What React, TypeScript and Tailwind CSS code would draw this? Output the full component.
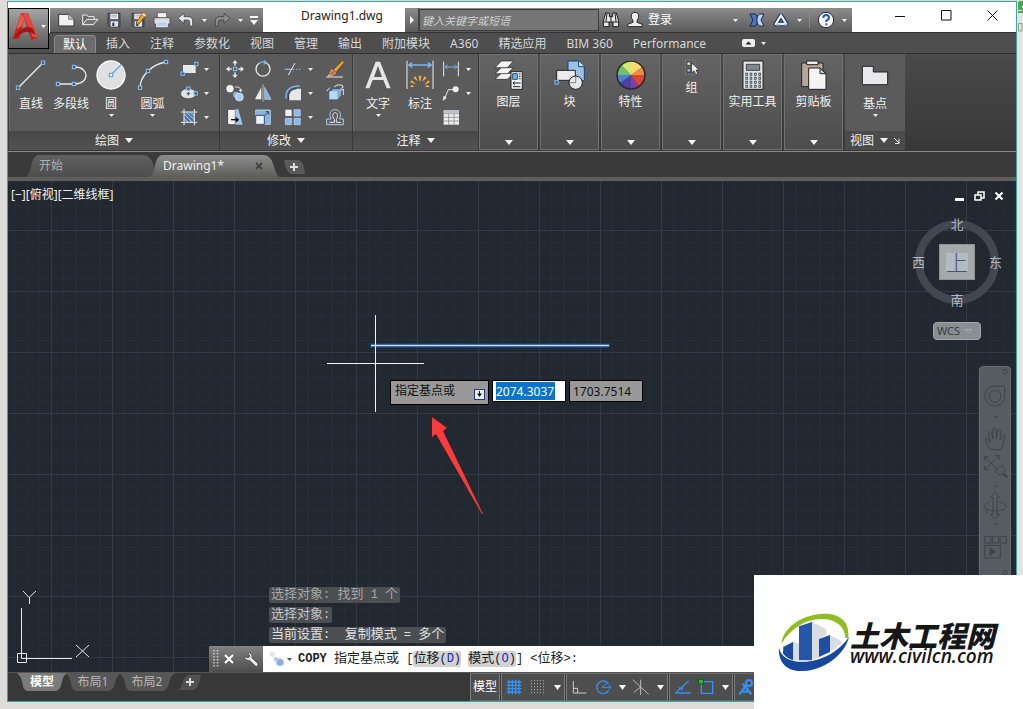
import React from "react";

type Kids = { children?: React.ReactNode };

/* Icons are drawn on a grid three times as fine as their size in pixels. */
function Icon({ w = 20, h = 20, children }: Kids & { w?: number; h?: number }) {
  return (
    <svg width={w} height={h} viewBox={`0 0 ${w * 3} ${h * 3}`} fill="none" className="shrink-0" aria-hidden="true">
      {children}
    </svg>
  );
}

function Down({ big = false }: { big?: boolean }) {
  return (
    <svg width={big ? 8 : 5} height={big ? 5 : 3} viewBox="0 0 8 5" preserveAspectRatio="none" className="shrink-0" aria-hidden="true">
      <path d="M0 0H8L4 5Z" fill="#f2f2f2" />
    </svg>
  );
}

function Grip({ x, y }: { x: number; y: number }) {
  return <rect x={x - 5} y={y - 5} width="10" height="10" fill="#3b5878" stroke="#8ec0f2" strokeWidth="3" />;
}

const LIGHT = "#e9ebee";
const BLUE = "#7db4ee";

const NewIcon = () => (
  <Icon><path d="M8 13H38L54 28V48H8Z" fill="#f2f2f2" stroke="#333" strokeWidth="3" /><path d="M38 13V28H54" fill="#bbb" stroke="#555" strokeWidth="2" /></Icon>
);
const OpenIcon = () => (
  <Icon><path d="M8 44V15H20L24 20H42V28" fill="#666" stroke="#eee" strokeWidth="3" /><path d="M8 44L20 28H54L40 44Z" fill="#777" stroke="#eee" strokeWidth="3" /></Icon>
);
const Disk = () => (
  <><path d="M12 10H48V50H16L12 46Z" fill="#56606e" stroke="#222" strokeWidth="2" /><path d="M19 11H42V27H19Z" fill="#f0f0f0" /><path d="M22 16H39M22 21H39" stroke="#888" strokeWidth="2" /><path d="M20 34H42V50H20Z" fill="#dfe5ec" /><path d="M25 38H31V48H25Z" fill="#333" /></>
);
const SaveIcon = () => <Icon><Disk /></Icon>;
const SaveAsIcon = () => (
  <Icon><Disk /><path d="M26 34L46 8L55 15L35 40L25 44Z" fill="#e9a52c" stroke="#4a3410" strokeWidth="2" /><path d="M46 8L55 15L51 20L42 13Z" fill="#f7e2a0" /></Icon>
);
const PrintIcon = () => (
  <Icon><path d="M16 8H44V24H16Z" fill="#f4f4f4" stroke="#444" strokeWidth="2" /><path d="M6 23H54V42H6Z" fill="#d9d9d9" stroke="#333" strokeWidth="2" /><path d="M14 35H46V50H14Z" fill="#b8d3ee" stroke="#eee" strokeWidth="3" /></Icon>
);
const UndoPath = ({ fill }: { fill: string }) => <path d="M6 25L24 10V20H36Q50 20 50 34V48H41V36Q41 30 34 30H24V40Z" fill={fill} stroke="#333" strokeWidth="2" />;
const UndoIcon = () => <Icon><UndoPath fill="#e4e8ec" /></Icon>;
const RedoIcon = () => <Icon><g transform="translate(60 0) scale(-1 1)"><UndoPath fill="#8d8d8d" /></g></Icon>;

const BinocularIcon = () => (
  <Icon><path d="M14 9H25V20H35V9H46L53 34V50H36V36H24V50H7V34Z" fill="#e8e8e8" stroke="#1d1d1d" strokeWidth="3" /><path d="M30 20V36M7 36H24M36 36H53M18 10L15 34M42 10L45 34" stroke="#1d1d1d" strokeWidth="3" /></Icon>
);
const UserIcon = () => (
  <Icon><path d="M30 7C40 7 43 16 40 25L36 33V37L52 43V50H8V43L24 37V33L20 25C17 16 20 7 30 7Z" fill="#eee" stroke="#222" strokeWidth="3" /></Icon>
);
const ExchangeIcon = () => (
  <Icon><path d="M9 12H24C34 16 34 44 24 48H9L18 30Z" fill="#4a78c4" stroke="#15264d" strokeWidth="3" /><path d="M51 12H38C27 18 27 42 38 48H51L42 30Z" fill="#bfd3ef" stroke="#15264d" strokeWidth="3" /></Icon>
);
const A360Icon = () => (
  <Icon><path d="M30 16L46 42H14Z" stroke="#1b2a4a" strokeWidth="13" strokeLinejoin="round" /><path d="M30 16L46 42H14Z" stroke="#e7effa" strokeWidth="7" strokeLinejoin="round" /><path d="M16 44H26M38 44H48M27 13H33" stroke="#9dbde6" strokeWidth="5" /></Icon>
);
const HelpIcon = () => (
  <Icon><circle cx="30" cy="30" r="23" fill="#f4f7fb" stroke="#223" strokeWidth="3" /><path d="M22 24Q22 15 30 15Q39 15 39 23Q39 28 31 32V36" stroke="#2559b0" strokeWidth="6" /><path d="M28 40H34V46H28Z" fill="#2559b0" /></Icon>
);

const LogoA = () => (
  <svg width="27" height="30" viewBox="0 0 81 90" aria-hidden="true">
    <path d="M26 4H48L78 78L58 84L37 22L22 80L2 82Z" fill="#c5221f" />
    <path d="M31 4H48L78 78L62 74Z" fill="#e2483e" />
    <path d="M2 82L22 56Q46 36 64 52L70 68Q44 50 24 68Z" fill="#a51317" />
    <path d="M26 4L13 52L30 42L38 18Z" fill="#e55a4c" />
  </svg>
);

const LineIcon = () => <Icon w={32} h={32}><path d="M9 87L84 11" stroke={LIGHT} strokeWidth="4" /><Grip x={9} y={86} /><Grip x={84} y={11} /></Icon>;
const PolyIcon = () => <Icon w={32} h={32}><path d="M9 75H60C104 75 104 24 60 24" stroke={LIGHT} strokeWidth="4" /><Grip x={57} y={24} /><Grip x={9} y={75} /><Grip x={57} y={75} /></Icon>;
const CircleIcon = () => <Icon w={32} h={32}><circle cx="48" cy="48" r="42" fill="#dfe0e2" stroke="#fff" strokeWidth="4" /><path d="M48 48L78 17" stroke="#6ba6e6" strokeWidth="4" /><rect x="43" y="43" width="10" height="10" fill="#fff" stroke="#5b98dc" strokeWidth="3" /></Icon>;
const ArcIcon = () => <Icon w={32} h={32}><path d="M9 87Q9 60 33 36Q55 14 87 9" stroke={LIGHT} strokeWidth="4" /><Grip x={87} y={9} /><Grip x={33} y={36} /><Grip x={9} y={86} /></Icon>;
const RectIcon = () => <Icon><path d="M12 18H50V42H12Z" fill="#e8e9eb" /><Grip x={52} y={15} /><Grip x={11} y={44} /></Icon>;
const EllipseIcon = () => <Icon><ellipse cx="28" cy="32" rx="22" ry="14" fill="#e2e3e5" /><path d="M28 27V37M23 32H33" stroke="#444" strokeWidth="3" /><Grip x={28} y={17} /><Grip x={50} y={31} /></Icon>;
const HatchIcon = () => <Icon><path d="M15 15H46V46H15Z" fill="#4c76a8" /><path d="M15 20L40 46M15 34L27 46M22 15L46 38M34 15L46 27" stroke="#bcd8f4" strokeWidth="3" /><path d="M15 6V55M46 6V55M6 15H55M6 46H55" stroke={LIGHT} strokeWidth="3" /></Icon>;

const MoveIcon = () => <Icon><path d="M30 3L38 13H32V20H28V13H22ZM30 57L38 47H32V40H28V47H22ZM3 30L13 22V28H20V32H13V38ZM57 30L47 22V28H40V32H47V38Z" fill={LIGHT} /><Grip x={30} y={30} /></Icon>;
const RotateIcon = () => <Icon><path d="M40 12A21 21 0 1 1 20 12" stroke={LIGHT} strokeWidth="4" /><path d="M20 12Q28 7 36 9" stroke={BLUE} strokeWidth="4" /><path d="M33 2L44 11L32 18Z" fill={BLUE} /></Icon>;
const TrimIcon = () => <Icon><path d="M5 31H28" stroke={BLUE} strokeWidth="4" /><path d="M30 31H56" stroke={BLUE} strokeWidth="3" strokeDasharray="5 4" /><path d="M16 48L36 12" stroke={LIGHT} strokeWidth="3" /></Icon>;
const BrushIcon = () => <Icon><path d="M25 32L52 5L58 10L33 40Z" fill="#e6a13c" stroke="#603c16" strokeWidth="2" /><path d="M20 32L32 42Q22 52 9 51Q16 44 20 32Z" fill="#e35823" stroke="#ffe0b0" strokeWidth="2" /><path d="M3 54H54" stroke={LIGHT} strokeWidth="3" /></Icon>;
const CopyIcon = () => <Icon><circle cx="15" cy="17" r="11" fill="#f2f2f2" /><circle cx="33" cy="35" r="9" fill="#8bb6e4" /><circle cx="43" cy="42" r="12" fill="#a9cdf2" stroke="#e8f2fd" strokeWidth="2" /><path d="M31 12Q46 10 47 22" stroke={LIGHT} strokeWidth="3" /><path d="M41 20H53L47 28Z" fill={LIGHT} /></Icon>;
const MirrorIcon = () => <Icon><path d="M25 13V49H6Z" fill="#eee" /><path d="M35 13V49H54Z" fill="#8fb0d1" stroke="#bdd7f0" strokeWidth="2" /><path d="M30 4V56" stroke={LIGHT} strokeWidth="2" /></Icon>;
const FilletIcon = () => <Icon><path d="M18 52V34Q24 19 41 17H54V52Z" fill="#e5e6e8" /><path d="M9 47V35Q14 10 43 9H50" stroke={BLUE} strokeWidth="4" /><path d="M17 52V34Q22 18 41 17" stroke="#27374e" strokeWidth="3" /></Icon>;
const ExplodeIcon = () => <Icon><path d="M13 25L25 17H49V37L39 50H13Z" fill="#83aed8" stroke="#24496e" strokeWidth="2" /><path d="M13 25H37V49H13Z" fill="#b8d8f6" /><path d="M5 25L14 14M27 12L36 6H51L55 12L46 18M46 24L55 18V36" stroke="#d8e7f6" strokeWidth="3" /></Icon>;
const StretchIcon = () => <Icon><path d="M8 7H31V53H8Z" fill="#f3f3f3" stroke="#222" strokeWidth="2" /><path d="M31 7L40 7L53 53H31Z" fill="#9fc6ed" /><path d="M18 38H38" stroke="#111" strokeWidth="4" /><path d="M32 29L43 38L32 47Z" fill="#111" /></Icon>;
const ScaleIcon = () => <Icon><path d="M8 9H52V52H8Z" fill="#8ab4df" stroke="#d9e8f7" strokeWidth="2" /><path d="M8 25H34V52H8Z" fill="#f0f2f5" stroke="#324b69" strokeWidth="3" /><path d="M35 26L46 15M38 14H47V23" stroke="#24496e" strokeWidth="3" /></Icon>;
const ArrayIcon = () => <Icon><path d="M7 8H26V27H7Z" fill="#f1f1f1" /><path d="M33 8H52V27H33ZM7 34H26V53H7ZM33 34H52V53H33Z" fill="#8eb9e6" stroke="#b9d8f8" strokeWidth="2" /></Icon>;
const OffsetIcon = () => (
  <Icon>
    <path d="M5 53H55V36H44V34C50 24 46 8 30 8C14 8 12 24 18 34V36H5Z" stroke="#a9cdf2" strokeWidth="3" />
    <path d="M13 46H28V38C20 26 24 17 30 17C38 17 40 26 34 38V46H48" stroke={LIGHT} strokeWidth="3" />
  </Icon>
);

const TextIcon = () => <Icon w={32} h={32}><path d="M10 88L41 8H54L86 88H74L64 63H32L22 88ZM36 54H60L48 20Z" fill="#e6e6e6" fillRule="evenodd" /></Icon>;
const DimIcon = () => (
  <Icon w={32} h={32}>
    <path d="M9 5V90M87 5V90" stroke={LIGHT} strokeWidth="3" />
    <path d="M16 18H80M25 11L14 18L25 25M71 11L82 18L71 25" stroke={BLUE} strokeWidth="4" />
    <g fill="#f3ae37"><path d="M44 50H52L50 66H46ZM28 57L35 52L42 67ZM61 52L68 57L54 68ZM18 70L23 64L36 76ZM73 64L78 70L60 77Z" /><path d="M18 84H32L24 77ZM63 84H78L70 77Z" /></g>
  </Icon>
);
const LinearIcon = () => <Icon><path d="M8 8V52M52 8V52" stroke={LIGHT} strokeWidth="3" /><path d="M12 24H48M20 18L12 24L20 30M40 18L48 24L40 30" stroke={BLUE} strokeWidth="3" /></Icon>;
const LeaderIcon = () => <Icon><path d="M9 50L22 20H36" stroke={LIGHT} strokeWidth="3" /><circle cx="44" cy="19" r="9" fill="#eee" /><path d="M5 54L8 38L17 44Z" fill={LIGHT} /></Icon>;
const TableIcon = () => <Icon><path d="M8 10H54V53H8Z" fill="#eee" /><path d="M8 20H54M8 31H54M8 42H54M23 20V53M39 20V53" stroke="#777" strokeWidth="2" /><path d="M8 10H54V19H8Z" fill="#bcc3ca" /></Icon>;

const LayersIcon = () => (
  <Icon w={32} h={32}>
    <g fill="#f4f4f4" stroke="#222" strokeWidth="2"><path d="M6 61L25 43H61L43 61Z" /><path d="M6 44L25 26H61L43 44Z" /><path d="M6 26L25 6H61L43 26Z" /></g>
    <path d="M54 38H88V91H54Z" fill="#eef1f5" stroke="#222" strokeWidth="3" /><path d="M59 44H73V61H59Z" fill="#79b4e8" stroke="#214c7b" strokeWidth="3" /><path d="M78 45H83M78 52H83M78 59H83M60 72H83M65 67L60 72L65 77M60 83H82" stroke="#222" strokeWidth="3" />
  </Icon>
);
const BlockIcon = () => (
  <Icon w={32} h={32}>
    <path d="M42 6H74L91 23V65H42Z" fill="#9cc2ea" stroke="#1d3f68" strokeWidth="3" /><path d="M74 6V23H91" fill="#dcecfb" stroke="#1d3f68" strokeWidth="3" />
    <path d="M8 34H64V64H8Z" fill="#ececee" stroke="#222" strokeWidth="3" /><circle cx="65" cy="71" r="20" fill="#e6e7ea" stroke="#222" strokeWidth="3" /><path d="M65 51V71H46" stroke="#555" strokeWidth="2" /><Grip x={8} y={70} />
  </Icon>
);
const WheelIcon = () => (
  <Icon w={32} h={32}>
    <path d="M48 48V4A44 44 0 0 1 84 22Z" fill="#f5dc78" /><path d="M48 48L84 22A44 44 0 0 1 92 48Z" fill="#ee8b44" /><path d="M48 48H92A44 44 0 0 1 74 84Z" fill="#dd4630" /><path d="M48 48L74 84A44 44 0 0 1 48 92Z" fill="#8c3c9a" /><path d="M48 48V92A44 44 0 0 1 12 74Z" fill="#4b3fa8" /><path d="M48 48L12 74A44 44 0 0 1 4 48Z" fill="#4f7fd0" /><path d="M48 48H4A44 44 0 0 1 18 16Z" fill="#6fc06c" /><path d="M48 48L18 16A44 44 0 0 1 48 4Z" fill="#d9e66e" />
    <circle cx="48" cy="48" r="42" stroke="#2b2b2b" strokeWidth="5" />
  </Icon>
);
const GroupIcon = () => <Icon w={16} h={18}><path d="M4 4H34V46H4Z" stroke="#7fa6c8" strokeWidth="2" strokeDasharray="3 4" /><path d="M9 9H20V19H9Z" fill="#dce9cb" stroke="#222" strokeWidth="2" /><path d="M9 29H20V39H9Z" fill="#8dbbea" stroke="#222" strokeWidth="2" /><path d="M23 12V42L30 35L36 47L41 44L36 33H45Z" fill="#f5f5e8" stroke="#222" strokeWidth="2" /></Icon>;
const CalcIcon = () => (
  <Icon w={32} h={32}>
    <path d="M18 6H78V91H18Z" fill="#e5e5e5" stroke="#222" strokeWidth="3" /><path d="M28 16H68V34H28Z" fill="#7f8790" stroke="#444" strokeWidth="3" />
    <path d="M25 46H72M25 58H72M25 70H72M25 82H72" stroke="#444c58" strokeWidth="9" strokeDasharray="8 5" /><path d="M27 46H72M27 58H72M27 70H72M27 82H72" stroke="#a9b4c4" strokeWidth="4" strokeDasharray="4 9" />
  </Icon>
);
const PasteIcon = () => (
  <Icon w={32} h={32}>
    <path d="M11 12H75V83H11Z" fill="#b5a797" stroke="#2b2520" strokeWidth="3" /><path d="M26 6H60V17H26Z" fill="#eee" stroke="#222" strokeWidth="3" /><path d="M32 27H66L84 44V91H32Z" fill="#f4f4f4" stroke="#222" strokeWidth="3" /><path d="M66 27V44H84Z" fill="#ccc" stroke="#222" strokeWidth="3" />
  </Icon>
);
const BaseIcon = () => <Icon w={32} h={32}><path d="M10 22H43V39H86V77H10Z" fill="#e9e9eb" stroke="#222" strokeWidth="3" /></Icon>;

/* ---------- ribbon building blocks ---------- */

function Big({ icon, label, arrow, width }: { icon: React.ReactNode; label: string; arrow?: boolean; width: string }) {
  return (
    <button className={`flex flex-col items-center pt-[5px] ${width}`}>
      {icon}
      <span className="mt-[5px] whitespace-nowrap text-xs leading-4 text-[#f0f0f0]">{label}</span>
      {arrow && <span className="mt-[2px]"><Down /></span>}
    </button>
  );
}

function Small({ icon, label, arrow }: { icon: React.ReactNode; label: string; arrow?: boolean }) {
  return (
    <button aria-label={label} className="flex h-6 items-center gap-[5px]">
      {icon}
      {arrow && <Down />}
    </button>
  );
}

const Stack = ({ children }: Kids) => <div className="flex flex-col pt-[3px]">{children}</div>;

function Panel({ title, width, children }: Kids & { title: string; width: string }) {
  return (
    <section className={`flex shrink-0 flex-col border-r border-[#383838] bg-[#5b5b5b] ${width}`}>
      <div className="flex flex-1 shadow-[inset_1px_0_0_#6a6a6a]">{children}</div>
      <button className="flex h-[19px] items-center justify-center gap-[6px] bg-linear-to-b from-[#484848] to-[#525252] text-xs text-[#f0f0f0]">
        {title}<Down big />
      </button>
    </section>
  );
}

function Folded({ icon, label }: { icon: React.ReactNode; label: string }) {
  return (
    <button className="mr-[2px] flex w-[59px] shrink-0 flex-col items-center border border-[#717171] bg-linear-to-b from-[#646464] to-[#4d4d4d] pb-1 pt-1">
      {icon}
      <span className="mt-[3px] whitespace-nowrap text-xs leading-4 text-[#f0f0f0]">{label}</span>
      <span className="mt-auto"><Down big /></span>
    </button>
  );
}

const QuickButton = ({ label, children }: Kids & { label: string }) => (
  <button aria-label={label} className="flex h-6 w-6 items-center justify-center">{children}</button>
);
const Drop = ({ label }: { label: string }) => (
  <button aria-label={label} className="flex h-6 w-3 items-center justify-center"><Down /></button>
);

function TitleBar() {
  return (
    <div className="flex h-[30px] bg-white pt-[6px]">
      <div className="flex w-[213px] shrink-0 items-center bg-linear-to-b from-[#8c8c8c] to-[#5b5b5b] pl-1">
        <QuickButton label="新建"><NewIcon /></QuickButton>
        <QuickButton label="打开"><OpenIcon /></QuickButton>
        <QuickButton label="保存"><SaveIcon /></QuickButton>
        <QuickButton label="另存为"><SaveAsIcon /></QuickButton>
        <QuickButton label="打印"><PrintIcon /></QuickButton>
        <QuickButton label="放弃"><UndoIcon /></QuickButton>
        <Drop label="放弃列表" />
        <QuickButton label="重做"><RedoIcon /></QuickButton>
        <Drop label="重做列表" />
        <button aria-label="自定义" className="ml-1 flex flex-col items-center gap-[2px]">
          <span className="h-[2px] w-2 bg-white" /><Down big />
        </button>
      </div>
      <h1 className="flex-1 pl-4 text-center text-xs leading-4 text-[#222]">Drawing1.dwg</h1>
      <div className="flex w-[447px] shrink-0 items-center bg-linear-to-b from-[#8c8c8c] to-[#5b5b5b]">
        <button aria-label="展开" className="flex h-6 w-[14px] items-center justify-center border-r border-[#444]">
          <svg width="4" height="8" viewBox="0 0 4 8"><path d="M0 0L4 4L0 8Z" fill="#fff" /></svg>
        </button>
        <input aria-label="搜索" placeholder="键入关键字或短语" className="h-[22px] w-[180px] border border-[#3c3c3c] bg-[#757575] px-[2px] text-[11px] italic text-white placeholder:text-[#d0d0d0]" />
        <QuickButton label="搜索"><BinocularIcon /></QuickButton>
        <button className="flex items-center gap-[3px] text-xs text-white"><span className="pl-[2px]"><UserIcon /></span>登录</button>
        <span className="ml-auto"><Drop label="登录菜单" /></span>
        <span className="ml-1"><QuickButton label="Exchange"><ExchangeIcon /></QuickButton></span>
        <QuickButton label="A360"><A360Icon /></QuickButton>
        <Drop label="A360 菜单" />
        <span className="mx-1 h-4 w-px bg-[#8a8a8a]" />
        <QuickButton label="帮助"><HelpIcon /></QuickButton>
        <span className="pr-[2px]"><Drop label="帮助菜单" /></span>
      </div>
      <div className="-mt-[6px] flex w-[164px] shrink-0 justify-end pr-px">
        <button aria-label="最小化" className="flex h-[26px] w-[46px] items-center justify-center"><svg width="11" height="11"><path d="M0 6.5H10" stroke="#111" /></svg></button>
        <button aria-label="最大化" className="flex h-[26px] w-[46px] items-center justify-center"><svg width="11" height="11"><path d="M.5.5H10V10H.5Z" fill="none" stroke="#111" /></svg></button>
        <button aria-label="关闭" className="flex h-[26px] w-[46px] items-center justify-center"><svg width="11" height="11"><path d="M.5.5L10.5 10.5M10.5.5L.5 10.5" stroke="#111" /></svg></button>
      </div>
    </div>
  );
}

const TABS = ["插入", "注释", "参数化", "视图", "管理", "输出", "附加模块", "A360", "精选应用", "BIM 360", "Performance"];

function Header() {
  return (
    <header className="flex bg-[#4e4e4e]">
      <div className="w-[42px] shrink-0 bg-linear-to-b from-white from-60% to-[#4e4e4e] to-60% pt-[6px]">
        <button aria-label="应用程序菜单" className="flex h-[41px] w-[41px] items-center justify-center gap-[2px] border border-black bg-linear-to-b from-[#a5a5a5] to-[#5c5c5c] pb-1">
          <LogoA /><Down />
        </button>
      </div>
      <div className="min-w-0 flex-1">
        <TitleBar />
        <nav className="flex h-[21px] items-stretch border-t border-[#333] text-xs text-[#d6d6d6]">
          <a href="#home" className="ml-1 mt-[2px] flex w-[42px] items-center justify-center rounded-t-sm border border-b-0 border-[#8a8a8a] bg-[#6b6b6b] text-white">默认</a>
          {TABS.map((t) => (
            <a key={t} href="#tab" className="flex items-center whitespace-nowrap px-[10px] pt-[2px]">{t}</a>
          ))}
          <button aria-label="最小化功能区" className="ml-[26px] flex items-center gap-[6px]">
            <svg width="13" height="8" viewBox="0 0 13 8"><rect width="13" height="8" rx="2" fill="#eee" /><path d="M3.500 5.500H9.500L6.500 2.500Z" fill="#222" /></svg>
            <Down />
          </button>
        </nav>
      </div>
    </header>
  );
}

function Ribbon() {
  return (
    <div className="flex h-[99px] border-b border-t border-b-[#8a8a8a] border-t-[#303030] bg-linear-to-b from-[#4a4a4a] to-[#383838] pb-px pl-px">
      <Panel title="绘图" width="w-[211px]">
        <Big icon={<LineIcon />} label="直线" width="ml-[3px] w-[38px]" />
        <Big icon={<PolyIcon />} label="多段线" width="w-[42px]" />
        <Big icon={<CircleIcon />} label="圆" arrow width="w-[38px]" />
        <Big icon={<ArcIcon />} label="圆弧" arrow width="w-[45px]" />
        <div className="ml-[4px]">
          <Stack>
            <Small icon={<RectIcon />} label="矩形" arrow />
            <Small icon={<EllipseIcon />} label="椭圆" arrow />
            <Small icon={<HatchIcon />} label="图案填充" arrow />
          </Stack>
        </div>
      </Panel>
      <Panel title="修改" width="w-[133px]">
        <div className="ml-[5px] flex gap-2">
          <Stack><Small icon={<MoveIcon />} label="移动" /><Small icon={<CopyIcon />} label="复制" /><Small icon={<StretchIcon />} label="拉伸" /></Stack>
          <Stack><Small icon={<RotateIcon />} label="旋转" /><Small icon={<MirrorIcon />} label="镜像" /><Small icon={<ScaleIcon />} label="缩放" /></Stack>
          <div className="pl-[2px] pr-1"><Stack><Small icon={<TrimIcon />} label="修剪" arrow /><Small icon={<FilletIcon />} label="圆角" arrow /><Small icon={<ArrayIcon />} label="阵列" arrow /></Stack></div>
          <Stack><Small icon={<BrushIcon />} label="删除" /><Small icon={<ExplodeIcon />} label="分解" /><Small icon={<OffsetIcon />} label="偏移" /></Stack>
        </div>
      </Panel>
      <Panel title="注释" width="w-[126px]">
        <Big icon={<TextIcon />} label="文字" arrow width="ml-[4px] w-[42px]" />
        <Big icon={<DimIcon />} label="标注" width="w-[42px]" />
        <Stack>
          <Small icon={<LinearIcon />} label="线性" arrow />
          <Small icon={<LeaderIcon />} label="引线" arrow />
          <Small icon={<TableIcon />} label="表格" />
        </Stack>
      </Panel>
      <div className="flex">
        <Folded icon={<LayersIcon />} label="图层" />
        <Folded icon={<BlockIcon />} label="块" />
        <Folded icon={<WheelIcon />} label="特性" />
        <Folded icon={<GroupIcon />} label="组" />
        <Folded icon={<CalcIcon />} label="实用工具" />
        <Folded icon={<PasteIcon />} label="剪贴板" />
      </div>
      <section className="flex w-[60px] shrink-0 flex-col bg-[#5b5b5b]">
        <div className="flex flex-1 justify-center"><Big icon={<BaseIcon />} label="基点" arrow width="w-[40px]" /></div>
        <button className="flex h-[19px] items-center gap-[6px] bg-[#4b4b4b] pl-[5px] text-xs text-[#f0f0f0]">
          视图<Down big />
          <svg width="6" height="6" viewBox="0 0 6 6"><path d="M0 0L5 5M5 1V5.500H1" stroke="#eee" fill="none" /></svg>
        </button>
      </section>
    </div>
  );
}

function FileTab({ active = false, children }: Kids & { active?: boolean }) {
  return (
    <div className={`relative flex h-[22px] items-center ${active ? "z-10 -ml-[11px] w-[131px]" : "w-[135px]"}`}>
      <svg className="absolute inset-0 h-full w-full" viewBox="0 0 135 22" preserveAspectRatio="none" aria-hidden="true">
        <defs>
          <linearGradient id={active ? "tabOn" : "tabOff"} x1="0" y1="0" x2="0" y2="1">
            <stop offset="0" stopColor={active ? "#8d8d8b" : "#606060"} /><stop offset="1" stopColor={active ? "#5d5d5a" : "#4e4e4e"} />
          </linearGradient>
        </defs>
        <path d="M0 22Q4 21 6 12Q8 0 14 0H118Q125 0 128 9Q131 21 135 22Z" fill={active ? "url(#tabOn)" : "url(#tabOff)"} />
      </svg>
      {children}
    </div>
  );
}

function FileTabs() {
  return (
    <div className="flex h-[29px] shrink-0 items-end border-b-4 border-[#5d5d5a] bg-[#3a3a3a] pl-[17px]">
      <FileTab><button className="relative pl-[14px] text-xs text-[#b0b0b0]">开始</button></FileTab>
      <FileTab active>
        <button className="relative pl-[14px] text-xs text-[#f0f0f0]">Drawing1*</button>
        <button aria-label="关闭图形" className="relative ml-auto mr-[17px]"><svg width="8" height="8"><path d="M1 1L7 7M7 1L1 7" stroke="#454545" strokeWidth="2" /></svg></button>
      </FileTab>
      <button aria-label="新图形" className="relative mb-[3px] ml-[3px] flex h-[14px] w-[22px] items-center justify-center">
        <svg width="22" height="14" viewBox="0 0 22 14"><path d="M1 0H16Q21 2 22 14H8Q3 12 1 0Z" fill="#5b5b5b" /><path d="M7 7H15M11 3V11" stroke="#ddd" strokeWidth="2" /></svg>
      </button>
    </div>
  );
}

/* ---------- drawing area ---------- */

function Drawing() {
  return (
    <>
      <svg className="absolute inset-0 h-full w-full" aria-hidden="true">
        <defs>
          <pattern id="minor" x="43" y="49" width="12.200" height="12.200" patternUnits="userSpaceOnUse"><path d="M.5 0V13M0 .5H13" stroke="#262d36" /></pattern>
          <pattern id="major" x="43" y="49" width="61" height="61" patternUnits="userSpaceOnUse"><path d="M.5 0V61M0 .5H61" stroke="#323b45" /></pattern>
        </defs>
        <rect width="100%" height="100%" fill="url(#minor)" />
        <rect width="100%" height="100%" fill="url(#major)" />
        <path d="M362 164.500H602" stroke="#28559c" strokeWidth="5" strokeOpacity=".45" />
        <path d="M363 164.500H601" stroke="#3569b4" strokeWidth="3" />
        <path d="M363 164.500H601" stroke="#d6e8fb" strokeWidth="1" />
        <path d="M367.500 134V231M319 182.500H416" stroke="#f2f2f2" />
        <path d="M424 236L439 247L435 250L475 333L474 333L428 253L424 256Z" fill="#fb3b3b" />
      </svg>
      <svg className="absolute bottom-[4px] left-[8px]" width="76" height="78" viewBox="0 0 76 78" fill="none" stroke="#e8e8e8" aria-hidden="true">
        <path d="M5.500 18V68.500H56M1.500 63.500H10.500V72.500H1.500ZM7 1L13 7.500L20 1M13.500 7V14M60 55L73 67M73 55L60 67" />
      </svg>
    </>
  );
}

function DynamicInput() {
  return (
    <div className="absolute left-[382px] top-[199px] flex items-start gap-[3px] text-xs text-[#111]">
      <div className="flex h-[25px] w-[99px] items-center justify-between border border-black bg-[#999] pl-1 pr-[3px]">
        <span className="pb-[3px]">指定基点或</span>
        <button aria-label="选项" className="mt-1 flex h-[11px] w-[11px] items-center justify-center border border-[#223a8c] bg-[#eee]">
          <svg width="7" height="7" viewBox="0 0 7 7"><path d="M3.500 0V5" stroke="#111" /><path d="M1 2.500H6L3.500 6Z" fill="#111" /></svg>
        </button>
      </div>
      <label className="flex h-[22px] w-[74px] items-center border border-black bg-white px-[3px]">
        <input aria-label="X 坐标" defaultValue="2074.3037" className="h-[18px] w-[59px] bg-[#0a74cc] text-white outline-none" />
      </label>
      <input aria-label="Y 坐标" defaultValue="1703.7514" className="h-[22px] w-[74px] border border-black bg-[#999] px-[3px] outline-none" />
    </div>
  );
}

function ViewCube() {
  return (
    <div className="absolute right-[14px] top-[34px] flex w-[90px] flex-col items-center text-[13px] leading-[18px] text-[#b5b9be]">
      <svg className="absolute left-[3px] top-[5px]" width="84" height="84" aria-hidden="true"><circle cx="42" cy="42" r="38" fill="none" stroke="#414852" strokeWidth="8" /></svg>
      <span className="relative">北</span>
      <div className="relative my-[11px] flex w-full items-center justify-between">
        <span>西</span>
        <button className="flex h-9 w-9 items-center justify-center border border-[#8f9394] bg-[#a6a9a9] text-[22px] font-light text-[#4d565f]"><span className="bg-[#b3bbc2]">上</span></button>
        <span>东</span>
      </div>
      <span className="relative">南</span>
      <button className="mt-[13px] flex h-[18px] w-[48px] items-center gap-1 rounded-[4px] border border-[#a3a7aa] bg-[#898e93] pl-[3px] text-[11px] text-[#353b43]">
        WCS<svg width="9" height="5"><path d="M1 .5H8L4.500 4Z" fill="none" stroke="#a7abb0" /></svg>
      </button>
    </div>
  );
}

function NavBar() {
  return (
    <div className="absolute right-[5px] top-[185px] h-[240px] w-8 rounded-[4px] border border-[#686e73] bg-[#565d62]">
      <svg width="30" height="210" viewBox="0 0 90 630" fill="none" stroke="#3c434b" strokeWidth="3" aria-hidden="true">
        <circle cx="75" cy="14" r="7" />
        <path d="M45 57H74V91A30 30 0 1 1 45 57Z" /><circle cx="45" cy="88" r="18" />
        <path d="M44 149H50L47 153ZM44 357H50L47 361ZM44 471H50L47 475Z" />
        <path d="M29 244L17 222Q14 211 23 216L31 226L25 197Q27 188 34 197L39 216L38 187Q43 179 48 187L49 215L54 191Q61 184 63 195L59 220L69 205Q76 201 75 211L64 248H35Z" />
        <path d="M14 270L55 310M57 266L14 307M14 281V269H26M45 266H58V278M14 295V308H27" /><circle cx="61" cy="310" r="13" /><path d="M70 320L82 332" strokeWidth="6" />
        <path d="M39 397V391H31L45 376L59 391H51V397V442H59L45 455L31 442H39Z" /><path d="M28 405C-4 418 18 432 45 432C83 432 91 411 58 405M24 425L16 432L24 439" />
        <path d="M14 508H33V528H14ZM37 508H56V528H37ZM60 508H79V528H60ZM14 535H61V573H14Z" /><path d="M30 543L47 554L30 565Z" fill="#3c434b" />
        <circle cx="75" cy="617" r="7" />
      </svg>
    </div>
  );
}

/* Chinese prompt text runs one size larger than the monospaced Latin text around it. */
const Zh = ({ children }: Kids) => <span className="text-[13px]">{children}</span>;
const History = ({ children, tone }: Kids & { tone: string }) => (
  <p className={`w-fit whitespace-pre rounded-[2px] bg-[#4c4f52] px-[2px] leading-4 ${tone}`}>{children}</p>
);

function CommandLine() {
  return (
    <div className="absolute inset-x-0 bottom-0 pl-[201px] font-['Liberation_Mono','Noto_Sans_CJK_SC',monospace] text-xs">
      <div className="mb-[3px] flex flex-col gap-1 pl-[60px]">
        <History tone="text-[#a4a6a8]"><Zh>选择对象</Zh>: <Zh>找到</Zh> 1 <Zh>个</Zh></History>
        <History tone="text-[#c0c2c4]"><Zh>选择对象</Zh>:</History>
        <History tone="text-[#dfe0e1]"><Zh>当前设置</Zh>:{"  "}<Zh>复制模式</Zh> = <Zh>多个</Zh></History>
      </div>
      <div className="flex h-[26px] rounded-l-[3px] bg-white">
        <div className="flex w-[54px] items-center rounded-l-[3px] bg-linear-to-b from-[#828282] to-[#4d4d4d] pl-1">
          <svg width="6" height="18" aria-hidden="true"><path d="M1 0V18M4.500 0V18" stroke="#ccc" strokeWidth="1.500" strokeDasharray="1.500 1.500" /></svg>
          <button aria-label="关闭命令行" className="ml-[5px]"><svg width="10" height="10"><path d="M1 1L9 9M9 1L1 9" stroke="#fff" strokeWidth="2" /></svg></button>
          <button aria-label="自定义" className="ml-[10px]">
            <svg width="15" height="15" viewBox="0 0 45 45"><path d="M17 2Q26 7 24 18L41 34Q44 40 38 43Q34 43 32 40L17 25Q7 27 2 18L3 14L12 18L18 13L13 4Z" fill="#f4f4f4" stroke="#333" strokeWidth="2" /></svg>
          </button>
        </div>
        <div className="flex items-center whitespace-pre pl-[6px] text-[#1c1c1c]">
          <svg width="16" height="16" viewBox="0 0 48 48" aria-hidden="true"><circle cx="10" cy="10" r="8" fill="#e2e5e8" /><circle cx="21" cy="25" r="7" fill="#b0cbe7" /><circle cx="33" cy="34" r="11" fill="#84ade0" stroke="#bfd6ee" strokeWidth="3" /></svg>
          <svg className="ml-[2px]" width="5" height="3"><path d="M0 0H5L2.500 3Z" fill="#555" /></svg>
          <p className="ml-[6px]">
            <b>COPY</b> <Zh>指定基点或</Zh> [<span className="rounded-[2px] bg-[#d2d2d2] py-px"><Zh>位移</Zh>(<span className="text-[#2222c8]">D</span>)</span> <span className="rounded-[2px] bg-[#d2d2d2] py-px"><Zh>模式</Zh>(<span className="text-[#2222c8]">O</span>)</span>] &lt;<Zh>位移</Zh>&gt;:
          </p>
        </div>
      </div>
    </div>
  );
}

function Canvas() {
  return (
    <main className="relative min-h-0 flex-1 overflow-hidden bg-[#212830]">
      <Drawing />
      <p className="relative w-fit pl-[3px] pt-[6px] text-xs leading-4 text-[#f0f0f0]">[−][俯视][二维线框]</p>
      <div className="absolute right-[12px] top-[10px] flex items-center gap-[9px]">
        <button aria-label="最小化视口"><svg width="11" height="10"><path d="M1 8.500H10" stroke="#fff" strokeWidth="3" /></svg></button>
        <button aria-label="还原视口"><svg width="11" height="10"><path d="M1 4H7V9H1ZM4 4V1H10V7H7" fill="none" stroke="#fff" strokeWidth="1.500" /></svg></button>
        <button aria-label="关闭视口"><svg width="10" height="10"><path d="M1.500 1.500L8.500 8.500M8.500 1.500L1.500 8.500" stroke="#fff" strokeWidth="2" /></svg></button>
      </div>
      <DynamicInput />
      <ViewCube />
      <NavBar />
      <CommandLine />
    </main>
  );
}

/* ---------- bottom bar ---------- */

function LayoutTab({ active = false, children }: Kids & { active?: boolean }) {
  return (
    <button className={`relative -mr-[2px] flex h-[18px] items-center justify-center text-xs ${active ? "z-10 w-[50px] font-bold text-white" : "w-[56px] text-[#b8b8b8]"}`}>
      <svg className="absolute inset-0 h-full w-full" viewBox="0 0 56 18" preserveAspectRatio="none" aria-hidden="true">
        <path d="M0 0Q4 2 6 10Q7 18 12 18H43Q48 18 50 10Q52 2 56 0Z" fill={active ? "#7b7b79" : "#575757"} />
      </svg>
      <span className="relative">{children}</span>
    </button>
  );
}

const StatusGroup = ({ children }: Kids) => (
  <div className="flex items-center border-x border-[#7c7c7c] bg-[#4e4e4e]">{children}</div>
);
const StatusButton = ({ label, children }: Kids & { label: string }) => (
  <button aria-label={label} className="flex w-6 justify-center">{children}</button>
);
const StatusDrop = () => <button aria-label="更多" className="flex w-[14px] items-center justify-center"><svg width="7" height="5"><path d="M0 0H7L3.500 5Z" fill="#fff" /></svg></button>;
const SB = "#3690f6";

function BottomBar() {
  return (
    <footer className="flex h-[29px] shrink-0 border-t border-[#555] bg-[#383838]">
      <div className="flex w-[462px] shrink-0 items-start pl-[9px]">
        <LayoutTab active>模型</LayoutTab>
        <LayoutTab>布局1</LayoutTab>
        <LayoutTab>布局2</LayoutTab>
        <span className="pl-1">
          <button aria-label="新建布局"><svg width="24" height="17" viewBox="0 0 24 17"><path d="M1 16Q5 14 6 7Q8 1 12 1H24Q22 14 17 16Z" fill="#515151" /><path d="M9 8H17M13 4V12" stroke="#d8d8d8" strokeWidth="2" /></svg></button>
        </span>
      </div>
      <div className="flex gap-px border-y border-[#6a6a6a]">
        <StatusGroup><button className="px-[2px] text-xs text-white">模型</button></StatusGroup>
        <StatusGroup>
          <StatusButton label="栅格"><Icon w={16} h={16}><path d="M9 2V46M19 2V46M29 2V46M39 2V46M2 9H46M2 19H46M2 29H46M2 39H46" stroke={SB} strokeWidth="4" /></Icon></StatusButton>
          <StatusButton label="捕捉"><Icon w={16} h={16}><path d="M3 5H46M3 14H46M3 23H46M3 32H46M3 41H46" stroke="#bbb" strokeWidth="3" strokeDasharray="3 6" /></Icon></StatusButton>
          <StatusDrop />
        </StatusGroup>
        <StatusGroup>
          <StatusButton label="正交"><Icon w={16} h={16}><path d="M7 6V42H46M7 28H20V42" stroke="#ccc" strokeWidth="3" /></Icon></StatusButton>
          <StatusButton label="极轴"><Icon w={16} h={16}><path d="M40 14A19 19 0 1 0 41 34" stroke={SB} strokeWidth="4" /><path d="M22 25H48M40 18L48 25L40 32M22 25L36 11" stroke={SB} strokeWidth="3" /></Icon></StatusButton>
          <StatusDrop />
          <StatusButton label="等轴测"><Icon w={18} h={16}><path d="M2 2L50 46M26 2V48M26 24L6 40" stroke="#bbb" strokeWidth="3" /></Icon></StatusButton>
          <StatusDrop />
        </StatusGroup>
        <StatusGroup>
          <StatusButton label="追踪"><Icon w={17} h={16}><path d="M44 6L5 42H50M14 27H24V35" stroke={SB} strokeWidth="4" /></Icon></StatusButton>
          <StatusButton label="对象捕捉"><Icon w={17} h={16}><path d="M10 8H44V43H10Z" stroke={SB} strokeWidth="4" /><rect x="2" y="1" width="14" height="14" fill="#2ec038" stroke="#0c5a1b" strokeWidth="3" /></Icon></StatusButton>
          <StatusDrop />
        </StatusGroup>
        <StatusGroup>
          <StatusButton label="注释可见性"><Icon w={18} h={16}><circle cx="33" cy="12" r="9" stroke={SB} strokeWidth="6" /><path d="M4 46L22 22L40 46M12 38H34M14 14L24 26" stroke={SB} strokeWidth="7" /></Icon></StatusButton>
        </StatusGroup>
      </div>
    </footer>
  );
}

function Watermark() {
  return (
    <aside className="fixed bottom-0 right-0 flex h-[134px] w-[269px] items-center justify-start bg-white pl-[24px]">
      <svg width="72" height="60" viewBox="85 123 216 180" className="shrink-0" aria-hidden="true">
        <path d="M95 218C102 162 169 126 232 128C276 130 302 158 295 201L287 200C286 167 258 145 222 144C174 140 125 169 95 218Z" fill="#8fbe22" />
        <path d="M88 230C84 277 116 303 160 300C221 298 287 251 298 197C274 235 225 267 170 272C128 275 95 263 88 230Z" fill="#17489c" />
        <path d="M101 228L131 212V268Q112 262 100 248Z" fill="#1b4a9f" />
        <path d="M148 166L187 153V268H148Z" fill="#2457a8" />
        <path d="M187 153L230 174V191L208 204V260L187 266Z" fill="#d9dce2" />
        <path d="M131 212L148 217V268H131Z" fill="#d9dce2" />
        <path d="M208 204L241 192V243L208 258Z" fill="#1f4fa4" />
        <path d="M241 192L276 211V217L241 243Z" fill="#d9dce2" />
      </svg>
      <div className="whitespace-nowrap pb-px italic text-[#161616]">
        <p className="font-['Noto_Sans_CJK_SC',sans-serif] text-[29px] font-black leading-7">土木工程网</p>
        <p className="font-['Open_Sans',sans-serif] text-[19px] font-semibold leading-4">www.civilcn.com</p>
      </div>
    </aside>
  );
}

export default function App() {
  return (
    <div className="flex h-screen bg-[#dddcda] pb-[7px] pl-[7px] pt-px font-['Noto_Sans','Noto_Sans_CJK_SC',sans-serif]">
      <div className="flex min-w-0 flex-1 flex-col overflow-hidden border border-[#3ba5a4]">
        <Header />
        <Ribbon />
        <FileTabs />
        <Canvas />
        <BottomBar />
      </div>
      <div className="w-[6px] shrink-0 bg-[#e6e2e2]">
        <svg width="6" height="32" aria-hidden="true"><path d="M1 2H3V0H5V4H2V8H6V11H1M3 6H5" stroke="#4fa654" strokeWidth="2" fill="none" /><path d="M1.500 22.500H5V30H1.500Z" fill="none" stroke="#8aa184" /></svg>
      </div>
      <Watermark />
    </div>
  );
}
